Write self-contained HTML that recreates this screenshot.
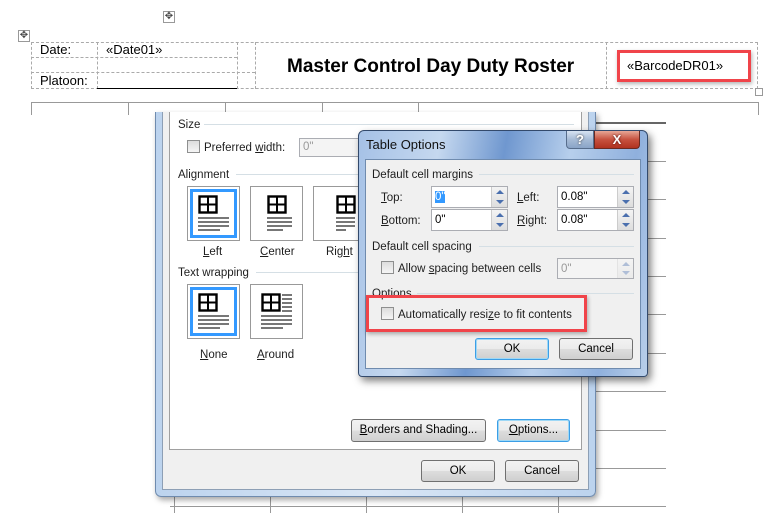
<!DOCTYPE html>
<html><head><meta charset="utf-8"><style>
*{box-sizing:border-box;margin:0;padding:0}
body{width:776px;height:513px;background:#fff;position:relative;overflow:hidden;font-family:"Liberation Sans","DejaVu Sans",sans-serif;font-size:12px;color:#000}
.a{position:absolute}
.dh{position:absolute;border-top:1px dashed #aaa;height:0}
.dv{position:absolute;border-left:1px dashed #aaa;width:0}
.hl{position:absolute;height:1px;background:#999}
.vl{position:absolute;width:1px;background:#999}
.t{position:absolute;font-size:11.5px;white-space:nowrap;color:#1e1e1e;margin-top:2px}
.sec{position:absolute;height:1px;background:#d5dfe5}
.cb{position:absolute;width:13px;height:13px;border:1px solid #8e8f8f;background:linear-gradient(#ddd,#f5f5f5)}
.btn{position:absolute;border:1px solid #707070;border-radius:3px;background:linear-gradient(#f2f2f2 0%,#ebebeb 50%,#dddddd 51%,#cfcfcf 100%);font-size:11.5px;text-align:center;color:#000}
.inp{position:absolute;border:1px solid #abadb3;background:#fff;font-size:11.5px;padding:4px 0 0 3px}
.spin{position:absolute;right:0;top:0;width:16px;height:100%;background:linear-gradient(#f4f4f4,#ddd);border-left:1px solid #ccc}
.spin:before{content:"";position:absolute;left:4px;top:3px;border:4px solid transparent;border-bottom:4px solid #4a6fae;border-top:0}
.spin:after{content:"";position:absolute;left:4px;bottom:3px;border:4px solid transparent;border-top:4px solid #4a6fae;border-bottom:0}
.ib{position:absolute;width:53px;height:55px;border:1px solid #999;background:#fff}
.ib.sel:after{content:"";position:absolute;left:2px;top:2px;right:2px;bottom:2px;border:3px solid #3399ff}
u{text-decoration:underline}
</style></head><body>

<div class="a" style="left:163px;top:11px;width:12px;height:12px;border:1px solid #999;font-size:10px;line-height:10px;text-align:center;color:#444">✥</div>
<div class="a" style="left:18px;top:30px;width:12px;height:12px;border:1px solid #999;font-size:10px;line-height:10px;text-align:center;color:#444">✥</div>

<div class="a" style="left:31px;top:42px;width:727px;height:47px;border:1px dashed #aaa"></div>
<div class="dv" style="left:97px;top:42px;height:47px"></div>
<div class="dv" style="left:237px;top:42px;height:47px"></div>
<div class="dv" style="left:255px;top:42px;height:47px"></div>
<div class="dv" style="left:606px;top:42px;height:47px"></div>
<div class="dh" style="left:31px;top:57px;width:206px"></div>
<div class="dh" style="left:31px;top:72px;width:224px"></div>
<div class="a" style="left:97px;top:88px;width:140px;height:1px;background:#000"></div>
<div class="a" style="left:40px;top:42px;font-size:13px">Date:</div>
<div class="a" style="left:106px;top:42px;font-size:13px">«Date01»</div>
<div class="a" style="left:40px;top:73px;font-size:13px">Platoon:</div>
<div class="a" style="left:287px;top:56px;font-size:19px;font-weight:bold">Master Control Day Duty Roster</div>
<div class="a" style="left:617px;top:50px;width:134px;height:32px;border:3px solid #f0444a;box-shadow:1px 2px 4px rgba(0,0,0,.3)"></div>
<div class="a" style="left:627px;top:58px;font-size:13px">«BarcodeDR01»</div>
<div class="a" style="left:755px;top:88px;width:8px;height:8px;border:1px solid #999"></div>

<div class="hl" style="left:31px;top:102px;width:727px"></div>
<div class="vl" style="left:31px;top:102px;height:13px"></div>
<div class="vl" style="left:128px;top:102px;height:13px"></div>
<div class="vl" style="left:225px;top:102px;height:13px"></div>
<div class="vl" style="left:322px;top:102px;height:13px"></div>
<div class="vl" style="left:418px;top:102px;height:13px"></div>
<div class="vl" style="left:758px;top:102px;height:13px"></div>
<div class="a" style="left:596px;top:122px;width:70px;height:2px;background:#666"></div>
<div class="hl" style="left:596px;top:161px;width:70px"></div>
<div class="hl" style="left:596px;top:199px;width:70px"></div>
<div class="hl" style="left:596px;top:238px;width:70px"></div>
<div class="hl" style="left:596px;top:276px;width:70px"></div>
<div class="hl" style="left:596px;top:314px;width:70px"></div>
<div class="hl" style="left:596px;top:353px;width:70px"></div>
<div class="hl" style="left:596px;top:391px;width:70px"></div>
<div class="hl" style="left:596px;top:430px;width:70px"></div>
<div class="hl" style="left:596px;top:468px;width:70px"></div>
<div class="hl" style="left:596px;top:506px;width:70px"></div>
<div class="hl" style="left:170px;top:506px;width:430px"></div>
<div class="vl" style="left:174px;top:497px;height:16px"></div>
<div class="vl" style="left:270px;top:497px;height:16px"></div>
<div class="vl" style="left:366px;top:497px;height:16px"></div>
<div class="vl" style="left:462px;top:497px;height:16px"></div>
<div class="vl" style="left:558px;top:497px;height:16px"></div>

<div class="a" style="left:155px;top:112px;width:441px;height:385px;background:linear-gradient(90deg,#bcd3ee,#d9e6f5 50%,#bcd3ee);border:1px solid #6f8bae;border-top:none;border-radius:0 0 6px 6px;box-shadow:2px 3px 6px rgba(0,0,0,.35)"></div>
<div class="a" style="left:162px;top:112px;width:427px;height:378px;background:#f0f0f0;border:1px solid #8d9fb5;border-top:none"></div>
<div class="a" style="left:169px;top:112px;width:413px;height:338px;background:#fff;border:1px solid #a0a0a0;border-top:none"></div>

<div class="t" style="left:178px;top:117px">Size</div>
<div class="sec" style="left:204px;top:124px;width:370px"></div>
<div class="cb" style="left:187px;top:140px"></div>
<div class="t" style="left:204px;top:140px">Preferred <u>w</u>idth:</div>
<div class="inp" style="left:299px;top:138px;width:70px;height:19px;color:#999;background:#f4f4f4;padding-top:2px">0"</div>
<div class="t" style="left:178px;top:167px">Alignment</div>
<div class="sec" style="left:236px;top:174px;width:338px"></div>

<svg width="0" height="0" style="position:absolute"><defs>
<g id="ic"><rect x="1.5" y="1.5" width="17" height="16" fill="none" stroke="#000" stroke-width="2.4"/><line x1="10" y1="1.5" x2="10" y2="17.5" stroke="#000" stroke-width="2"/><line x1="1.5" y1="9.5" x2="18.5" y2="9.5" stroke="#000" stroke-width="2"/></g>
<g id="ln" fill="#777"><rect x="0" y="0" width="31" height="2"/><rect x="0" y="4" width="31" height="2"/><rect x="0" y="8" width="31" height="2"/><rect x="0" y="12" width="22" height="2"/></g>
</defs></svg>

<div class="ib sel" style="left:187px;top:186px"><svg class="a" style="left:10px;top:8px" width="45" height="45"><use href="#ic"/><use href="#ln" x="0" y="22"/></svg></div>
<div class="ib" style="left:250px;top:186px"><svg class="a" style="left:16px;top:8px" width="45" height="45"><use href="#ic"/><use href="#ln" x="-6" y="22"/></svg></div>
<div class="ib" style="left:313px;top:186px"><svg class="a" style="left:22px;top:8px" width="45" height="45"><use href="#ic"/><use href="#ln" x="-12" y="22"/></svg></div>
<div class="t" style="left:203px;top:244px"><u>L</u>eft</div>
<div class="t" style="left:260px;top:244px"><u>C</u>enter</div>
<div class="t" style="left:326px;top:244px">Rig<u>h</u>t</div>
<div class="t" style="left:178px;top:265px">Text wrapping</div>
<div class="sec" style="left:256px;top:272px;width:318px"></div>
<div class="ib sel" style="left:187px;top:284px"><svg class="a" style="left:10px;top:8px" width="45" height="45"><use href="#ic"/><use href="#ln" x="0" y="22"/></svg></div>
<div class="ib" style="left:250px;top:284px"><svg class="a" style="left:10px;top:8px" width="45" height="45"><use href="#ic"/><g fill="#777"><rect x="21" y="1" width="10" height="2"/><rect x="21" y="5" width="10" height="2"/><rect x="21" y="9" width="10" height="2"/><rect x="21" y="13" width="10" height="2"/><rect x="21" y="17" width="10" height="2"/></g><use href="#ln" x="0" y="22"/></svg></div>
<div class="t" style="left:200px;top:347px"><u>N</u>one</div>
<div class="t" style="left:257px;top:347px"><u>A</u>round</div>

<div class="btn" style="left:351px;top:419px;width:135px;height:23px;line-height:21px"><u>B</u>orders and Shading...</div>
<div class="btn" style="left:497px;top:419px;width:73px;height:23px;line-height:21px;border-color:#3c9ee6;box-shadow:inset 0 0 0 1px #9ed8f6"><u>O</u>ptions...</div>
<div class="btn" style="left:421px;top:460px;width:74px;height:22px;line-height:20px">OK</div>
<div class="btn" style="left:505px;top:460px;width:74px;height:22px;line-height:20px">Cancel</div>

<div class="a" style="left:358px;top:130px;width:290px;height:247px;border:1px solid #334a6c;border-radius:6px 6px 4px 4px;background:linear-gradient(100deg,#a5c1e6 0%,#c5d8ef 25%,#6f97cf 45%,#b7cfec 65%,#8fb0dd 85%,#b9cfea 100%);box-shadow:3px 4px 8px rgba(0,0,0,.5)"></div>
<div class="a" style="left:366px;top:137px;font-size:13px;color:#111">Table Options</div>
<div class="a" style="left:566px;top:131px;width:28px;height:18px;border:1px solid #576d8c;border-top:none;border-radius:0 0 0 4px;background:linear-gradient(#d7e3f2,#a6bbd6 50%,#8aa4c7);color:#fff;font-weight:bold;text-align:center;font-size:13px;line-height:17px;text-shadow:0 0 2px #333">?</div>
<div class="a" style="left:594px;top:131px;width:46px;height:18px;border:1px solid #6b2a22;border-top:none;border-radius:0 0 4px 0;background:linear-gradient(#e8a796,#c7523f 50%,#b03220);color:#fff;font-weight:bold;text-align:center;font-size:13px;line-height:17px;text-shadow:0 0 2px #400">X</div>
<div class="a" style="left:365px;top:159px;width:276px;height:210px;background:#f0f0f0;border:1px solid #6f8bae"></div>

<div class="t" style="left:372px;top:167px">Default cell margins</div>
<div class="sec" style="left:479px;top:174px;width:155px"></div>
<div class="t" style="left:381px;top:190px"><u>T</u>op:</div>
<div class="inp" style="left:431px;top:186px;width:77px;height:22px"><span style="background:#3399ff;color:#fff">0"</span><div class="spin"></div></div>
<div class="t" style="left:517px;top:190px"><u>L</u>eft:</div>
<div class="inp" style="left:557px;top:186px;width:77px;height:22px">0.08"<div class="spin"></div></div>
<div class="t" style="left:381px;top:213px"><u>B</u>ottom:</div>
<div class="inp" style="left:431px;top:209px;width:77px;height:22px">0"<div class="spin"></div></div>
<div class="t" style="left:517px;top:213px"><u>R</u>ight:</div>
<div class="inp" style="left:557px;top:209px;width:77px;height:22px">0.08"<div class="spin"></div></div>

<div class="t" style="left:372px;top:239px">Default cell spacing</div>
<div class="sec" style="left:479px;top:246px;width:155px"></div>
<div class="cb" style="left:381px;top:261px"></div>
<div class="t" style="left:398px;top:261px">Allow <u>s</u>pacing between cells</div>
<div class="inp" style="left:557px;top:258px;width:77px;height:21px;background:#f4f4f4;color:#999">0"<div class="spin" style="opacity:.4"></div></div>

<div class="t" style="left:372px;top:286px">Options</div>
<div class="sec" style="left:417px;top:293px;width:217px"></div>
<div class="a" style="left:366px;top:295px;width:221px;height:37px;border:3px solid #f0444a;box-shadow:1px 2px 4px rgba(0,0,0,.3)"></div>
<div class="cb" style="left:381px;top:307px"></div>
<div class="t" style="left:398px;top:307px">Automatically resi<u>z</u>e to fit contents</div>

<div class="btn" style="left:475px;top:338px;width:74px;height:22px;line-height:20px;border-color:#3c9ee6;box-shadow:inset 0 0 0 1px #9ed8f6">OK</div>
<div class="btn" style="left:559px;top:338px;width:74px;height:22px;line-height:20px">Cancel</div>

</body></html>
